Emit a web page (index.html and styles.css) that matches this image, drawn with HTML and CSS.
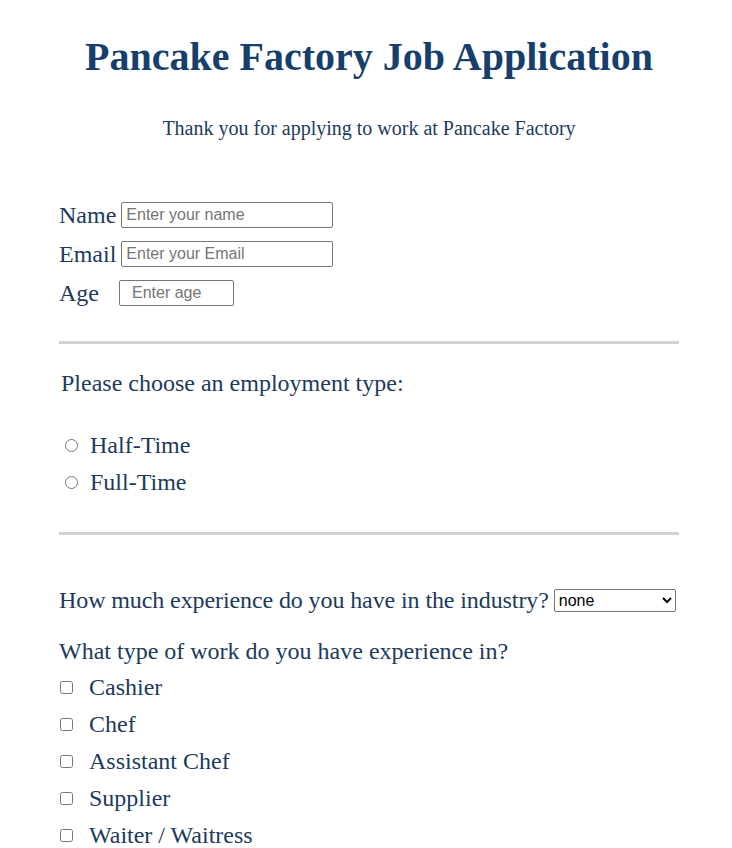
FILE: index.html
```html
<!DOCTYPE html>
<html lang="en">
<head>
<meta charset="utf-8">
<title>Pancake Factory Job Application</title>
<link rel="stylesheet" href="styles.css">
</head>
<body>
<main class="page">
  <header class="intro">
    <h1 class="title">Pancake Factory Job Application</h1>
    <p class="subtitle">Thank you for applying to work at Pancake Factory</p>
  </header>
  <form class="form">
    <section class="personal">
      <div class="field"><label class="label" for="name">Name</label><input class="text-input" id="name" type="text" placeholder="Enter your name"></div>
      <div class="field"><label class="label" for="email">Email</label><input class="text-input" id="email" type="email" placeholder="Enter your Email"></div>
      <div class="field"><label class="label label-age" for="age">Age</label><input class="text-input age-input" id="age" type="number" placeholder="Enter age"></div>
    </section>
    <hr class="divider">
    <section class="employment">
      <p class="question question-emp">Please choose an employment type:</p>
      <label class="option radio-option"><input type="radio" name="type" class="radio"><span>Half-Time</span></label>
      <label class="option radio-option"><input type="radio" name="type" class="radio"><span>Full-Time</span></label>
    </section>
    <hr class="divider">
    <section class="experience">
      <div class="question question-exp">
        <label class="exp-label" for="exp">How much experience do you have in the industry?</label>
        <select id="exp" class="select">
          <option>none</option>
          <option>1-2 years</option>
          <option>3-5 years</option>
          <option>5+ years</option>
        </select>
      </div>
      <p class="question question-work">What type of work do you have experience in?</p>
      <label class="option check-option"><input type="checkbox" class="check"><span>Cashier</span></label>
      <label class="option check-option"><input type="checkbox" class="check"><span>Chef</span></label>
      <label class="option check-option"><input type="checkbox" class="check"><span>Assistant Chef</span></label>
      <label class="option check-option"><input type="checkbox" class="check"><span>Supplier</span></label>
      <label class="option check-option"><input type="checkbox" class="check"><span>Waiter / Waitress</span></label>
    </section>
  </form>
</main>
</body>
</html>
```
FILE: styles.css
```css
html, body {
  margin: 0;
  padding: 0;
  background: #ffffff;
}
body {
  font-family: "Liberation Serif", "Times New Roman", serif;
  color: #1d3a5c;
}
.page {
  width: 620px;
  margin: 0 0 0 59px;
  padding-top: 34px;
}
.intro {
  text-align: center;
}
.title {
  margin: 0;
  font-size: 40px;
  font-weight: bold;
  color: #173f6d;
  line-height: 46px;
}
.subtitle {
  margin: 36px 0 0;
  font-size: 20px;
  line-height: 24px;
}
.form {
  margin-top: 62px;
}
.personal {
  display: flex;
  flex-direction: column;
  gap: 13px;
}
.field {
  display: flex;
  align-items: center;
  font-size: 24px;
  height: 26px;
}
.label {
  margin-right: 5px;
}
.label-age {
  margin-right: 20px;
}
.text-input {
  width: 212px;
  height: 26px;
  box-sizing: border-box;
  border: 1px solid #767676;
  border-radius: 2px;
  padding: 1px 4px;
  font-family: "Liberation Sans", Arial, sans-serif;
  font-size: 16px;
  color: #000;
}
.text-input::placeholder {
  color: #757575;
}
.age-input {
  width: 115px;
  padding-left: 12px;
}
.divider {
  border: none;
  height: 3px;
  background: #d3d3d3;
  margin: 35px 0 0;
}
.employment {
  padding-top: 25px;
  display: flex;
  flex-direction: column;
}
.employment + .divider {
  margin-top: 31px;
}
.question {
  margin: 0;
  font-size: 24px;
  line-height: 28px;
}
.question-emp {
  padding-left: 2px;
  margin-bottom: 30px;
}
.option {
  display: flex;
  align-items: center;
  font-size: 24px;
  height: 37px;
}
.radio {
  margin: 0 12px 0 6px;
  width: 13px;
  height: 13px;
}
.experience {
  padding-top: 51px;
}
.question-exp {
  display: flex;
  align-items: center;
  gap: 5px;
  white-space: nowrap;
}
.exp-label {
  letter-spacing: -0.1px;
}
.select {
  flex: 0 0 auto;
  width: 122px;
  height: 23px;
  font-family: "Liberation Sans", Arial, sans-serif;
  font-size: 16px;
  color: #000;
  border: 1px solid #767676;
  border-radius: 2px;
  background: #fff;
}
.question-work {
  margin-top: 23px;
  margin-bottom: 4px;
}
.check {
  margin: 0 16px 0 1px;
  width: 13px;
  height: 13px;
}
```
